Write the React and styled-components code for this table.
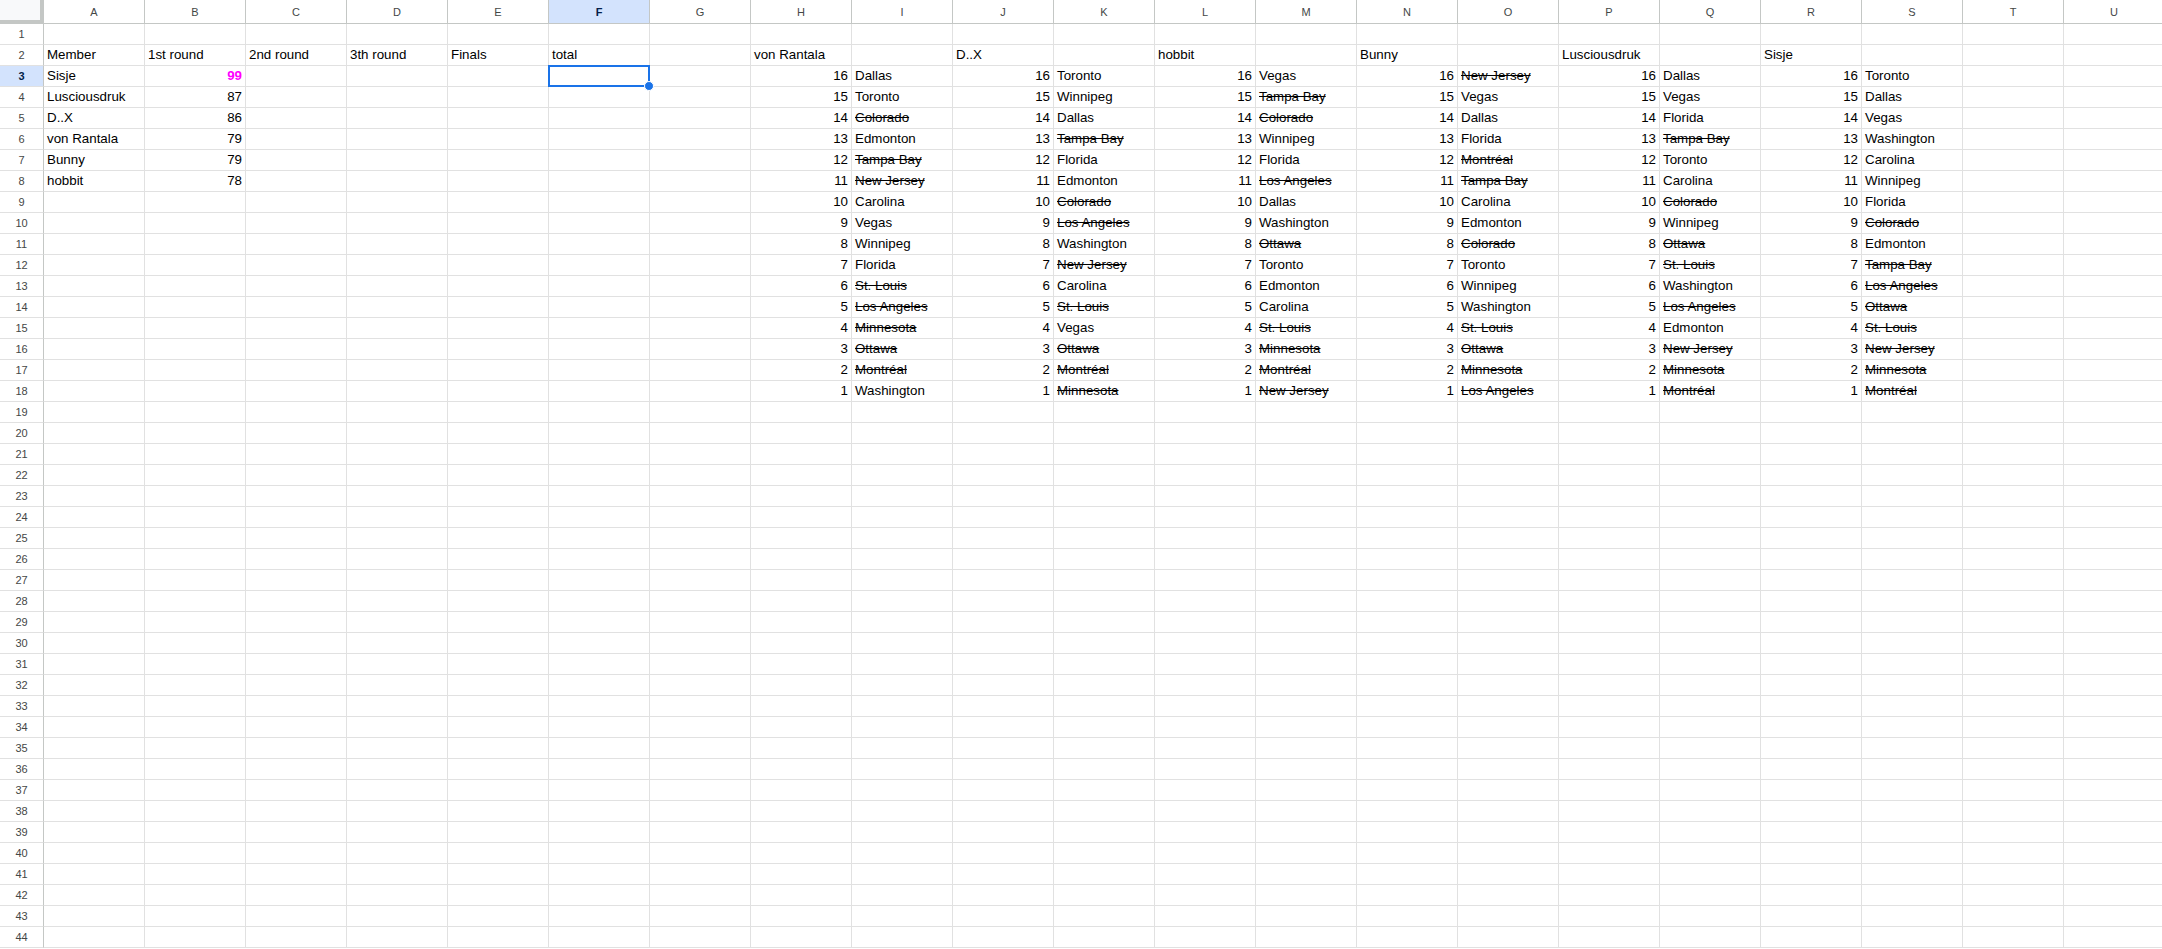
import React from "react";
import styled, { createGlobalStyle, css } from "styled-components";

/* ================= DATA ================= */

const COLS = "ABCDEFGHIJKLMNOPQRSTU".split("");
const ROW_COUNT = 44;
const OUT = ["Colorado", "Tampa Bay", "New Jersey", "St. Louis", "Los Angeles", "Minnesota", "Ottawa", "Montréal"];

const headers = ["Member", "1st round", "2nd round", "3th round", "Finals", "total"];

const members = [
  ["Sisje", 99],
  ["Lusciousdruk", 87],
  ["D..X", 86],
  ["von Rantala", 79],
  ["Bunny", 79],
  ["hobbit", 78],
];

const picks = [
  ["von Rantala", ["Dallas", "Toronto", "Colorado", "Edmonton", "Tampa Bay", "New Jersey", "Carolina", "Vegas", "Winnipeg", "Florida", "St. Louis", "Los Angeles", "Minnesota", "Ottawa", "Montréal", "Washington"]],
  ["D..X", ["Toronto", "Winnipeg", "Dallas", "Tampa Bay", "Florida", "Edmonton", "Colorado", "Los Angeles", "Washington", "New Jersey", "Carolina", "St. Louis", "Vegas", "Ottawa", "Montréal", "Minnesota"]],
  ["hobbit", ["Vegas", "Tampa Bay", "Colorado", "Winnipeg", "Florida", "Los Angeles", "Dallas", "Washington", "Ottawa", "Toronto", "Edmonton", "Carolina", "St. Louis", "Minnesota", "Montréal", "New Jersey"]],
  ["Bunny", ["New Jersey", "Vegas", "Dallas", "Florida", "Montréal", "Tampa Bay", "Carolina", "Edmonton", "Colorado", "Toronto", "Winnipeg", "Washington", "St. Louis", "Ottawa", "Minnesota", "Los Angeles"]],
  ["Lusciousdruk", ["Dallas", "Vegas", "Florida", "Tampa Bay", "Toronto", "Carolina", "Colorado", "Winnipeg", "Ottawa", "St. Louis", "Washington", "Los Angeles", "Edmonton", "New Jersey", "Minnesota", "Montréal"]],
  ["Sisje", ["Toronto", "Dallas", "Vegas", "Washington", "Carolina", "Winnipeg", "Florida", "Colorado", "Edmonton", "Tampa Bay", "Los Angeles", "Ottawa", "St. Louis", "New Jersey", "Minnesota", "Montréal"]],
];

// returns what sits in a cell, keyed by 1-based row and 0-based column
function cellAt(row, col) {
  if (row === 2 && col < 6) return { text: headers[col] };
  if (row >= 3 && row <= 8 && col < 2) {
    const [name, score] = members[row - 3];
    if (col === 0) return { text: name };
    return { text: String(score), num: true, accent: row === 3 };
  }
  if (col >= 7 && col <= 18) {
    const block = Math.floor((col - 7) / 2);
    const isTeam = (col - 7) % 2 === 1;
    const [name, list] = picks[block];
    if (row === 2 && !isTeam) return { text: name };
    if (row >= 3 && row <= 18) {
      const i = row - 3;
      if (!isTeam) return { text: String(16 - i), num: true };
      return { text: list[i], strike: OUT.includes(list[i]) };
    }
  }
  return null;
}

/* ================= COMPONENT ================= */

function App() {
  const rows = Array.from({ length: ROW_COUNT }, (_, i) => i + 1);

  return (
    <>
      <GlobalStyle />
      <Sheet>
        <Corner />
        {COLS.map((c) => (
          <ColHead key={c} $active={c === "F"}>{c}</ColHead>
        ))}

        {rows.map((r) => (
          <React.Fragment key={r}>
            <RowHead $active={r === 3}>{r}</RowHead>
            {COLS.map((c, ci) => {
              const data = cellAt(r, ci);
              const selected = r === 3 && c === "F";
              return (
                <Cell key={c} $num={data?.num} $strike={data?.strike} $accent={data?.accent}>
                  {data?.text}
                  {selected && (
                    <Selection>
                      <Handle />
                    </Selection>
                  )}
                </Cell>
              );
            })}
          </React.Fragment>
        ))}
      </Sheet>
    </>
  );
}

export default App;

/* ================= STYLES ================= */

const GlobalStyle = createGlobalStyle`
  html, body {
    margin: 0;
    padding: 0;
    background: #ffffff;
    overflow: hidden;
  }
  * { box-sizing: border-box; }
`;

const Sheet = styled.div`
  display: grid;
  grid-template-columns: 44px repeat(21, 101px);
  grid-template-rows: 24px;
  grid-auto-rows: 21px;
  width: max-content;
  font-family: "Liberation Sans", Arial, sans-serif;
`;

const Corner = styled.div`
  background: #f8f9fa;
  border-right: 4px solid #c4c7c5;
  border-bottom: 4px solid #c4c7c5;
`;

const headBase = css`
  display: flex;
  align-items: center;
  justify-content: center;
  font-size: 11px;
  color: #444746;
  background: #ffffff;
`;

const ColHead = styled.div`
  ${headBase}
  border-right: 1px solid #c4c7c5;
  border-bottom: 1px solid #c4c7c5;
  padding-top: 1px;

  ${(p) =>
    p.$active &&
    css`
      background: #d3e3fd;
      color: #041e49;
      font-weight: 700;
    `}
`;

const RowHead = styled.div`
  ${headBase}
  border-right: 1px solid #c4c7c5;
  border-bottom: 1px solid #e1e1e1;

  ${(p) =>
    p.$active &&
    css`
      background: #d3e3fd;
      color: #041e49;
      font-weight: 700;
    `}
`;

const Cell = styled.div`
  position: relative;
  border-right: 1px solid #e1e1e1;
  border-bottom: 1px solid #e1e1e1;
  padding: 0 3px;
  font-size: 10pt;
  line-height: 20px;
  color: #000000;
  white-space: nowrap;
  text-align: ${(p) => (p.$num ? "right" : "left")};
  text-decoration: ${(p) => (p.$strike ? "line-through" : "none")};

  ${(p) =>
    p.$accent &&
    css`
      color: #ff00ff;
      font-weight: 700;
    `}
`;

const Selection = styled.div`
  position: absolute;
  top: -1px;
  left: -1px;
  width: 102px;
  height: 22px;
  border: 2px solid #1a73e8;
  pointer-events: none;
  z-index: 2;
`;

const Handle = styled.div`
  position: absolute;
  right: -6px;
  bottom: -6px;
  width: 10px;
  height: 10px;
  border-radius: 50%;
  background: #1a73e8;
  border: 1px solid #ffffff;
`;
